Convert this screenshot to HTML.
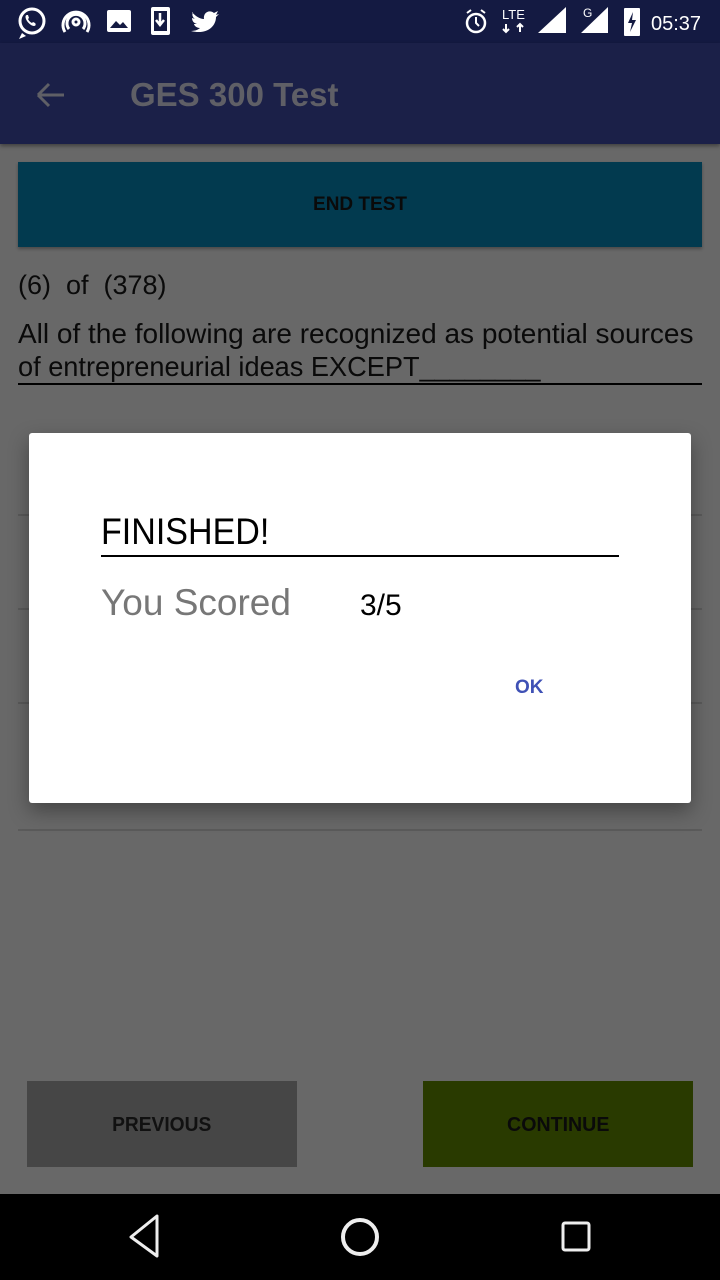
<!DOCTYPE html>
<html><head><meta charset="utf-8"><style>
*{margin:0;padding:0;box-sizing:border-box}
body{width:720px;height:1280px;position:relative;background:#686868;font-family:"Liberation Sans",sans-serif;overflow:hidden}
.a{position:absolute}
.sq{display:inline-block;transform-origin:left center;white-space:nowrap}
</style></head><body>
<div class="a" style="left:0;top:0;width:720px;height:43px;background:#141a42"></div>
<svg class="a" style="left:0;top:0" width="720" height="43">
<g fill="none" stroke="#fff" stroke-width="3">
<circle cx="32" cy="21" r="12"/>
<circle cx="76" cy="22" r="3"/><path d="M69 29a9 9 0 1 1 14 0M65 32a13 13 0 1 1 22 0"/>
</g>
<path d="M22 33l-3 6 7-3z" fill="#fff"/>
<path d="M27 15c-2 0-2 3 0 6s5 5 7 5c2 0 2-2 1-3l-2-1-1 1c-2-1-3-2-4-4l1-1-1-3z" fill="#fff"/>
<rect x="107" y="10" width="24" height="22" rx="2" fill="#fff"/><path d="M110 28l6-7 4 4 3-3 5 6z" fill="#141a42"/>
<rect x="151" y="7" width="19" height="28" rx="2" fill="#fff"/><rect x="154" y="11" width="13" height="20" fill="#141a42"/><path d="M160 13v11M156 20l4 5 4-5" stroke="#fff" stroke-width="2.5" fill="none"/>
<path d="M192 12c3 4 8 7 12 7-1-6 5-10 10-6l4-2-2 4 3-1-3 3c0 10-10 18-25 14 5 0 8-2 9-3-4 0-6-3-6-4h3c-4-1-5-4-5-6l3 1c-3-2-3-5-2-7z" fill="#fff"/>
<circle cx="476" cy="23" r="9" fill="none" stroke="#fff" stroke-width="2.5"/><path d="M476 17v6l3 3" stroke="#fff" stroke-width="2" fill="none"/>
<path d="M467 13l4-3M485 13l-4-3" stroke="#fff" stroke-width="2"/>
<text x="502" y="19" fill="#fff" font-size="13" font-family="Liberation Sans">LTE</text>
<path d="M506 24v8M503 29l3 3 3-3M520 32v-8M517 27l3-3 3 3" stroke="#fff" stroke-width="2" fill="none"/>
<path d="M538 33L566 7V33z" fill="#fff"/>
<text x="583" y="17" fill="#fff" font-size="12" font-family="Liberation Sans">G</text>
<path d="M581 33L608 7V33z" fill="#fff"/>
<rect x="624" y="8" width="16" height="28" rx="1" fill="#fff"/><path d="M633 12l-5 11h4l-2 9 6-12h-4z" fill="#141a42"/>
<text x="651" y="30" fill="#fff" font-size="20" font-family="Liberation Sans">05:37</text>
</svg>
<div class="a" style="left:0;top:43px;width:720px;height:101px;background:#1b2048;box-shadow:0 2px 4px rgba(0,0,0,.4)"></div>
<svg class="a" style="left:34px;top:80px" width="34" height="30"><path d="M4 15H30M4 15L15 4M4 15L15 26" stroke="#5f5f66" stroke-width="3" fill="none"/></svg>
<div class="a" style="left:130px;top:76px;color:#5f5f66;font-size:33px;font-weight:bold"><span class="sq">GES 300 Test</span></div>
<div class="a" style="left:18px;top:162px;width:684px;height:85px;background:#023a4f;box-shadow:0 2px 3px rgba(0,0,0,.3);text-align:center;line-height:86px;font-size:19px;font-weight:bold;color:#0a0a0a"><span class="sq">END TEST</span></div>
<div class="a" style="left:18px;top:270px;font-size:27px;color:#0a0a0a"><span class="sq">(6)&nbsp; of&nbsp; (378)</span></div>
<div class="a" style="left:18px;top:317px;font-size:28px;line-height:33px;color:#0a0a0a"><span class="sq">All of the following are recognized as potential sources</span><br><span class="sq" style="transform:scaleX(.97)">of entrepreneurial ideas EXCEPT________</span></div>
<div class="a" style="left:18px;top:383px;width:684px;height:2px;background:#000"></div>
<div class="a" style="left:18px;top:514px;width:684px;height:2px;background:#5a5a5a"></div>
<div class="a" style="left:18px;top:608px;width:684px;height:2px;background:#5a5a5a"></div>
<div class="a" style="left:18px;top:702px;width:684px;height:2px;background:#5a5a5a"></div>
<div class="a" style="left:18px;top:829px;width:684px;height:2px;background:#5a5a5a"></div>
<div class="a" style="left:29px;top:433px;width:662px;height:370px;background:#fff;border-radius:3px;box-shadow:0 8px 20px rgba(0,0,0,.35)"></div>
<div class="a" style="left:101px;top:511px;font-size:37px;color:#000"><span class="sq" style="transform:scaleX(.92)">FINISHED!</span></div>
<div class="a" style="left:101px;top:555px;width:518px;height:2px;background:#000"></div>
<div class="a" style="left:101px;top:582px;font-size:37px;color:#777"><span class="sq">You Scored</span></div>
<div class="a" style="left:360px;top:589px;font-size:30px;color:#000"><span class="sq">3/5</span></div>
<div class="a" style="left:515px;top:677px;font-size:19px;font-weight:bold;color:#3f51b5"><span class="sq">OK</span></div>
<div class="a" style="left:27px;top:1081px;width:270px;height:86px;background:#464646;text-align:center;line-height:88px;font-size:20px;font-weight:bold;color:#111"><span class="sq" style="transform:scaleX(.96);transform-origin:center">PREVIOUS</span></div>
<div class="a" style="left:423px;top:1081px;width:270px;height:86px;background:#293a00;text-align:center;line-height:88px;font-size:20px;font-weight:bold;color:#0a0a0a"><span class="sq" style="transform:scaleX(.98);transform-origin:center">CONTINUE</span></div>
<div class="a" style="left:0;top:1194px;width:720px;height:86px;background:#000"></div>
<svg class="a" style="left:0;top:1194px" width="720" height="86">
<path d="M157 22L131 43L157 62z" fill="none" stroke="#eee" stroke-width="3" stroke-linejoin="round"/>
<circle cx="360" cy="43" r="17" fill="none" stroke="#eee" stroke-width="4"/>
<rect x="563" y="29" width="26" height="27" rx="2" fill="none" stroke="#eee" stroke-width="3"/>
</svg>
</body></html>
